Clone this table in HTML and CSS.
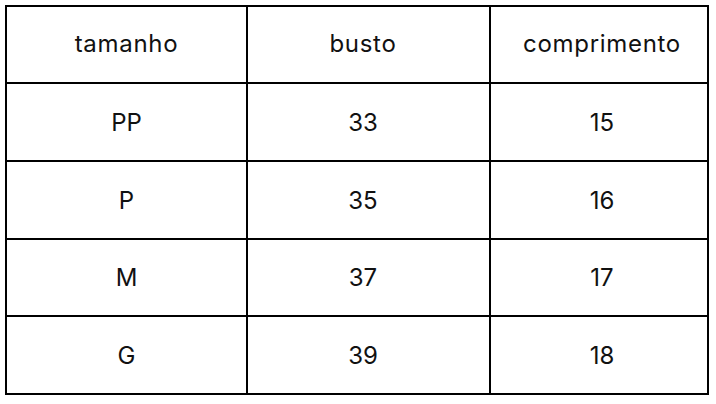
FILE: index.html
```html
<!DOCTYPE html>
<html lang="pt">
<head>
<meta charset="utf-8">
<link rel="stylesheet" href="styles.css">
</head>
<body>
<table class="sizes">
  <tr class="r1"><td class="c1">tamanho</td><td class="c2">busto</td><td class="c3">comprimento</td></tr>
  <tr class="r2"><td class="c1">PP</td><td class="c2">33</td><td class="c3">15</td></tr>
  <tr class="r3"><td class="c1">P</td><td class="c2">35</td><td class="c3">16</td></tr>
  <tr class="r4"><td class="c1">M</td><td class="c2">37</td><td class="c3">17</td></tr>
  <tr class="r5"><td class="c1">G</td><td class="c2">39</td><td class="c3">18</td></tr>
</table>
</body>
</html>
```
FILE: styles.css
```css
html, body { margin: 0; padding: 0; background: #fff; }
body { padding: 5px 0 0 5px; }
.sizes {
  border-collapse: separate;
  border-spacing: 0;
  border-top: 2px solid #000;
  border-left: 2px solid #000;
  font-family: Inter, "Liberation Sans", sans-serif;
  font-size: 24px;
  font-weight: 380;
  color: #111;
  table-layout: fixed;
}
.sizes td {
  border-right: 2px solid #000;
  border-bottom: 2px solid #000;
  text-align: center;
  vertical-align: middle;
  padding: 0;
  box-sizing: border-box;
}
.r1 td { letter-spacing: 0.7px; }
.c1 { width: 241px; }
.c2 { width: 243px; padding-right: 11px !important; }
.c3 { width: 218px; padding-left: 6px !important; }
.r1 td { height: 77px; padding-bottom: 2px; }
.r2 td { height: 78px; }
.r3 td { height: 78px; }
.r4 td { height: 77px; }
.r5 td { height: 78px; }
```
